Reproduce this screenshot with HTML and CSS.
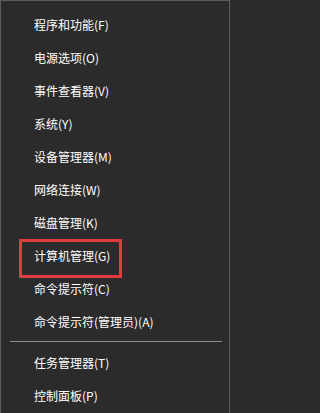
FILE: index.html
```html
<!DOCTYPE html>
<html lang="zh-CN">
<head>
<meta charset="utf-8">
<title>Win+X 菜单</title>
<link rel="stylesheet" href="styles.css">
</head>
<body>
<nav class="menu">
  <ul class="group">
    <li class="item">程序和功能(F)</li>
    <li class="item">电源选项(O)</li>
    <li class="item">事件查看器(V)</li>
    <li class="item">系统(Y)</li>
    <li class="item">设备管理器(M)</li>
    <li class="item">网络连接(W)</li>
    <li class="item">磁盘管理(K)</li>
    <li class="item item-marked">计算机管理(G)<span class="mark"></span></li>
    <li class="item">命令提示符(C)</li>
    <li class="item">命令提示符(管理员)(A)</li>
  </ul>
  <hr class="sep">
  <ul class="group">
    <li class="item">任务管理器(T)</li>
    <li class="item">控制面板(P)</li>
  </ul>
</nav>
</body>
</html>
```

FILE: styles.css
```css
html, body {
  margin: 0;
  padding: 0;
  background: #2b2b2b;
  overflow: hidden;
}

.menu {
  box-sizing: border-box;
  width: 230px;
  min-height: 430px;
  background: #2b2b2b;
  border: 1px solid #5c5c5c;
  border-bottom: none;
  padding-top: 7px;
  font-family: "Noto Sans CJK SC", "Microsoft YaHei", sans-serif;
  font-size: 12px;
  color: #ffffff;
}

.group {
  list-style: none;
  margin: 0;
  padding: 0;
}

.item {
  position: relative;
  height: 33px;
  line-height: 33px;
  padding-left: 33px;
  white-space: nowrap;
}

.mark {
  position: absolute;
  left: 18px;
  top: 0;
  width: 103px;
  height: 39px;
  box-sizing: border-box;
  border: 3px solid #e23a3e;
}

.sep {
  border: none;
  height: 1px;
  background: #8e8e8e;
  margin: 3px 7px 4px 9px;
}
```
